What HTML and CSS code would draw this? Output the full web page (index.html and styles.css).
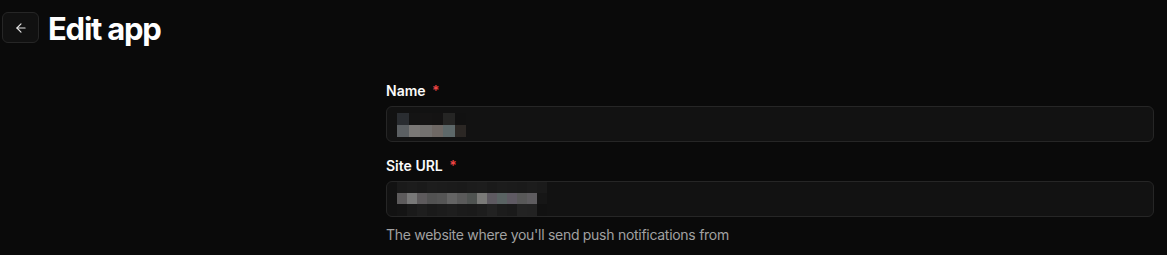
FILE: index.html
```html
<!DOCTYPE html>
<html lang="en">
<head>
<meta charset="utf-8">
<title>Edit app</title>
<link rel="stylesheet" href="styles.css">
</head>
<body>
<header class="top">
  <button class="back" aria-label="Back">
    <svg width="14" height="14" viewBox="0 0 24 24" fill="none" stroke="currentColor" stroke-width="2" stroke-linecap="round" stroke-linejoin="round"><path d="M19 12H5"/><path d="M12 19l-7-7 7-7"/></svg>
  </button>
  <h1 class="title">Edit app</h1>
</header>
<main class="layout">
  <div class="side"></div>
  <form class="form">
    <div class="field">
      <label class="label">Name <span class="req">*</span></label>
      <div class="input">
        <div class="mosaic m-name">
          <span style="background:#2a2d31"></span><span style="background:#141414"></span><span style="background:#151414"></span><span style="background:#141313"></span><span style="background:#252524"></span><span style="background:#111"></span>
          <span style="background:#5b5f62"></span><span style="background:#7a7876"></span><span style="background:#73716f"></span><span style="background:#6e6864"></span><span style="background:#5d6869"></span><span style="background:#2b2724"></span>
        </div>
      </div>
    </div>
    <div class="field">
      <label class="label">Site URL <span class="req">*</span></label>
      <div class="input">
        <div class="mosaic m-url">
          <span style="background:#1a1a1a"></span><span style="background:#1c1c1c"></span><span style="background:#1a1a1a"></span><span style="background:#1d1d1d"></span><span style="background:#1c1c1c"></span><span style="background:#1b1b1b"></span><span style="background:#1a1a1a"></span><span style="background:#1c1c1c"></span><span style="background:#1d1d1d"></span><span style="background:#1a1a1a"></span><span style="background:#1c1c1c"></span><span style="background:#1b1b1b"></span><span style="background:#1a1a1a"></span><span style="background:#1c1c1c"></span><span style="background:#1a1a1a"></span>
          <span style="background:#5d5b5c"></span><span style="background:#787878"></span><span style="background:#5d5a5c"></span><span style="background:#525252"></span><span style="background:#555"></span><span style="background:#646464"></span><span style="background:#5a5a5a"></span><span style="background:#4f5351"></span><span style="background:#7a7a78"></span><span style="background:#5e5a61"></span><span style="background:#5a6363"></span><span style="background:#5f5a63"></span><span style="background:#585858"></span><span style="background:#5e5c5f"></span><span style="background:#161616"></span>
          <span style="background:#141414"></span><span style="background:#1a1a1a"></span><span style="background:#1e1e1e"></span><span style="background:#1a1a1a"></span><span style="background:#1c1c1c"></span><span style="background:#1e1e1e"></span><span style="background:#1b1b1b"></span><span style="background:#1a1a1a"></span><span style="background:#1d1d1d"></span><span style="background:#222"></span><span style="background:#1c1c1c"></span><span style="background:#1a1a1a"></span><span style="background:#232323"></span><span style="background:#222"></span><span style="background:#111"></span>
        </div>
      </div>
      <p class="help">The website where you'll send push notifications from</p>
    </div>
  </form>
</main>
</body>
</html>
```
FILE: styles.css
```css
* { box-sizing: border-box; }
html, body { margin: 0; padding: 0; background: #0a0a0a; }
body {
  font-family: Inter, "Noto Sans", sans-serif;
  color: #fafafa;
  width: 1167px;
  height: 255px;
  overflow: hidden;
}
.top {
  display: flex;
  align-items: flex-start;
  gap: 9px;
  padding: 12px 0 0 2px;
  height: 44px;
}
.back {
  width: 37px;
  height: 31px;
  display: flex;
  align-items: center;
  justify-content: center;
  background: #111111;
  border: 1px solid #262626;
  border-radius: 6px;
  color: #e5e5e5;
  padding: 0;
  cursor: pointer;
}
.title {
  margin: 1px 0 0;
  font-size: 31px;
  line-height: 32px;
  font-weight: 700;
  letter-spacing: -0.04em;
  color: #ffffff;
}
.layout {
  display: grid;
  grid-template-columns: 386px 768px;
  padding-top: 37px;
}
.form {
  display: flex;
  flex-direction: column;
  gap: 14px;
}
.field {
  display: flex;
  flex-direction: column;
}
.label {
  font-size: 14px;
  line-height: 20px;
  font-weight: 600;
  color: #fafafa;
  margin-bottom: 5px;
}
.req {
  color: #ef4444;
  margin-left: 3px;
  font-weight: 600;
}
.input {
  height: 36px;
  background: #121212;
  border: 1px solid #262626;
  border-radius: 6px;
  display: flex;
  align-items: center;
  padding-left: 10px;
}
.mosaic { display: grid; }
.mosaic span { display: block; }
.m-name {
  grid-template-columns: repeat(6, 11.5px);
  grid-template-rows: 12px 12px;
  margin-top: 2px;
}
.m-url {
  grid-template-columns: repeat(15, 10px);
  grid-template-rows: 11px 11px 12px;
}
.help {
  margin: 8px 0 0;
  font-size: 14px;
  line-height: 20px;
  letter-spacing: -0.02em;
  color: #a1a1a1;
}
```
